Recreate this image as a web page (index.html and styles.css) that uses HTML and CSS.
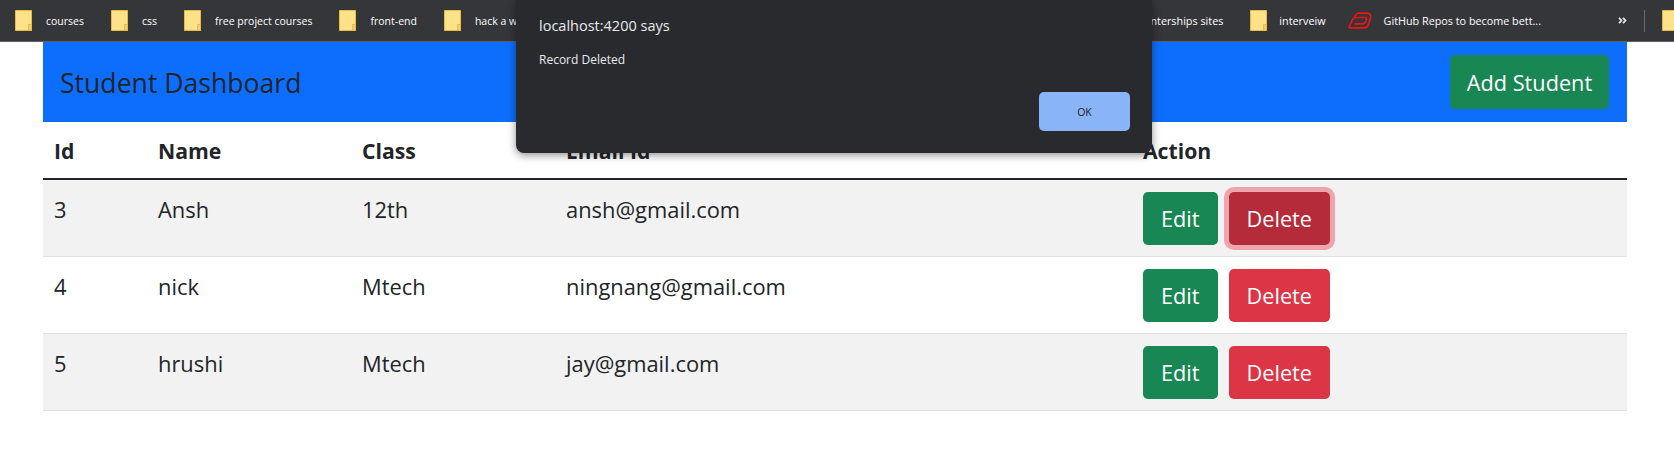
FILE: index.html
```html
<!DOCTYPE html>
<html lang="en">
<head>
    <meta charset="UTF-8">
    <meta name="viewport" content="width=device-width, initial-scale=1.0">
    <title>Student Dashboard</title>
    <link rel="stylesheet" href="styles.css">
</head>
<body>
    <svg class="sprite" width="0" height="0">
        <symbol id="folder" viewBox="0 0 17 21">
            <path d="M.5.5h16v20H.5z" fill="#fee28a" stroke="#e9b949"/>
            <path d="M13.500 20.500v-6h3v6z" fill="#f5cf65" stroke="#e9b949"/>
        </symbol>
    </svg>

    <!-- bookmarks bar -->
    <nav class="bookmarks">
        <div class="bookmarks-left">
            <a class="bookmark"><svg class="folder"><use href="#folder"/></svg>courses</a>
            <a class="bookmark"><svg class="folder"><use href="#folder"/></svg>css</a>
            <a class="bookmark"><svg class="folder"><use href="#folder"/></svg>free project courses</a>
            <a class="bookmark"><svg class="folder"><use href="#folder"/></svg>front-end</a>
            <a class="bookmark"><svg class="folder"><use href="#folder"/></svg>hack a wave</a>
        </div>
        <div class="bookmarks-right">
            <a class="bookmark">interships sites</a>
            <a class="bookmark"><svg class="folder"><use href="#folder"/></svg>interveiw</a>
            <a class="bookmark bookmark-repo">
                <svg class="repo-icon" viewBox="0 0 24 17">
                    <path d="M9.500 1.200H19Q23.500 1.500 22.500 6L20.500 12.500Q19.500 15.800 16 15.800H2Q.8 15.800 1.300 14.500L4.800 7Q5.500 5.500 7.500 5.500H17Q19 5.500 18.500 7.500L17.500 10Q16.800 11.800 15 11.800H6.500M9.500 1.200L6.500 4.500" fill="none" stroke="#f01414" stroke-width="1.700"/>
                </svg>GitHub Repos to become bett...</a>
            <svg class="more" viewBox="0 0 9 7">
                <path d="M1 .8L3.500 3.500 1 6.200M5 .8L7.500 3.500 5 6.200" fill="none" stroke="#e8eaed" stroke-width="1.700"/>
            </svg>
            <span class="bar-sep"></span>
            <svg class="folder"><use href="#folder"/></svg>
        </div>
    </nav>

    <main class="container">
        <header class="dash-head">
            <h1>Student Dashboard</h1>
            <button class="btn btn-green btn-add">Add Student</button>
        </header>

        <table class="students">
            <thead>
                <tr>
                    <th class="col-id">Id</th>
                    <th class="col-name">Name</th>
                    <th class="col-class">Class</th>
                    <th class="col-email">Email Id</th>
                    <th>Action</th>
                </tr>
            </thead>
            <tbody>
                <tr>
                    <td>3</td>
                    <td>Ansh</td>
                    <td>12th</td>
                    <td>ansh@gmail.com</td>
                    <td class="cell-actions"><button class="btn btn-green">Edit</button><button class="btn btn-red btn-focus">Delete</button></td>
                </tr>
                <tr>
                    <td>4</td>
                    <td>nick</td>
                    <td>Mtech</td>
                    <td>ningnang@gmail.com</td>
                    <td class="cell-actions"><button class="btn btn-green">Edit</button><button class="btn btn-red">Delete</button></td>
                </tr>
                <tr>
                    <td>5</td>
                    <td>hrushi</td>
                    <td>Mtech</td>
                    <td>jay@gmail.com</td>
                    <td class="cell-actions"><button class="btn btn-green">Edit</button><button class="btn btn-red">Delete</button></td>
                </tr>
            </tbody>
        </table>
    </main>

    <!-- browser alert -->
    <div class="alert-box">
        <div class="alert-title">localhost:4200 says</div>
        <div class="alert-msg">Record Deleted</div>
        <div class="alert-actions">
            <button class="alert-ok">OK</button>
        </div>
    </div>
</body>
</html>
```

FILE: styles.css
```css
body {
    margin: 0;
    font-family: "Open Sans", "Noto Sans", sans-serif;
    color: #212529;
    background: #fff;
    overflow: hidden;
}
.sprite {
    position: absolute;
}
.bookmarks {
    height: 41px;
    background: #35363a;
    border-bottom: 1px solid #5f6064;
    display: flex;
    justify-content: space-between;
    align-items: center;
    padding: 0 0 0 15px;
    overflow: hidden;
}
.bookmarks-left, .bookmarks-right {
    display: flex;
    flex: none;
    align-items: center;
    gap: 27px;
}
.bookmarks-right {
    margin-right: -5px;
}
.bookmark {
    display: flex;
    align-items: center;
    gap: 14px;
    color: #fff;
    font-size: 10.5px;
    white-space: nowrap;
}
.bookmarks-right .bookmark {
    font-size: 10.8px;
    gap: 12px;
}
.folder {
    width: 17px;
    height: 21px;
    flex: none;
}
.repo-icon {
    width: 24px;
    height: 17px;
    flex: none;
}
.bookmarks-right .bookmark-repo {
    margin-left: -5px;
}
.more {
    width: 9px;
    height: 7px;
    flex: none;
    margin-left: 50px;
}
.bar-sep {
    width: 1px;
    height: 22px;
    flex: none;
    background: #6a6b6f;
    margin: 0 -10px;
}
.container {
    margin: 0 47px 0 43px;
}
.dash-head {
    height: 80px;
    background: #0d6efd;
    display: flex;
    justify-content: space-between;
    align-items: center;
    padding: 0 18px 0 17px;
}
.dash-head h1 {
    margin: 2px 0 0;
    font-size: 26.6px;
    font-weight: 400;
}
.btn {
    height: 53px;
    border: none;
    border-radius: 5px;
    padding: 0 18px;
    font-family: inherit;
    font-size: 21.7px;
    color: #fff;
}
.btn-green {
    background: #198754;
}
.btn-red {
    background: #dc3545;
    margin-left: 11px;
}
.btn-focus {
    background: #b62b39;
    box-shadow: 0 0 0 5px #eca5ac;
}
.btn-add {
    width: 159px;
    height: 54px;
    padding: 0;
}
.students {
    width: 100%;
    border-collapse: collapse;
    table-layout: fixed;
    font-size: 21.9px;
}
.students th {
    height: 56px;
    padding: 0 11px;
    text-align: left;
    font-size: 21.2px;
    font-weight: 700;
    border-bottom: 2px solid #212529;
}
.students td {
    height: 77px;
    box-sizing: border-box;
    padding: 15px 11px 0;
    vertical-align: top;
    border-bottom: 1px solid #dee2e6;
    line-height: 30px;
}
.students td.cell-actions {
    padding-top: 12px;
}
.cell-actions .btn {
    vertical-align: top;
}
.students tbody tr:nth-child(odd) {
    background: #f2f2f2;
}
.col-id {
    width: 82px;
}
.col-name, .col-class {
    width: 182px;
}
.col-email {
    width: 555px;
}
.alert-box {
    position: absolute;
    left: 516px;
    top: 0;
    width: 636px;
    height: 153px;
    box-sizing: border-box;
    padding: 16px 22px 0 23px;
    background: #292a2d;
    border-radius: 0 0 8px 8px;
    box-shadow: 0 2px 8px rgba(0, 0, 0, 0.45);
    color: #e8eaed;
}
.alert-title {
    font-size: 14.5px;
    line-height: 20px;
}
.alert-msg {
    font-size: 12px;
    line-height: 18px;
    margin-top: 15px;
}
.alert-actions {
    display: flex;
    justify-content: flex-end;
    margin-top: 23px;
}
.alert-ok {
    width: 91px;
    height: 39px;
    border: none;
    border-radius: 5px;
    background: #8ab4f8;
    color: #202124;
    font-family: inherit;
    font-size: 10.5px;
}
```
